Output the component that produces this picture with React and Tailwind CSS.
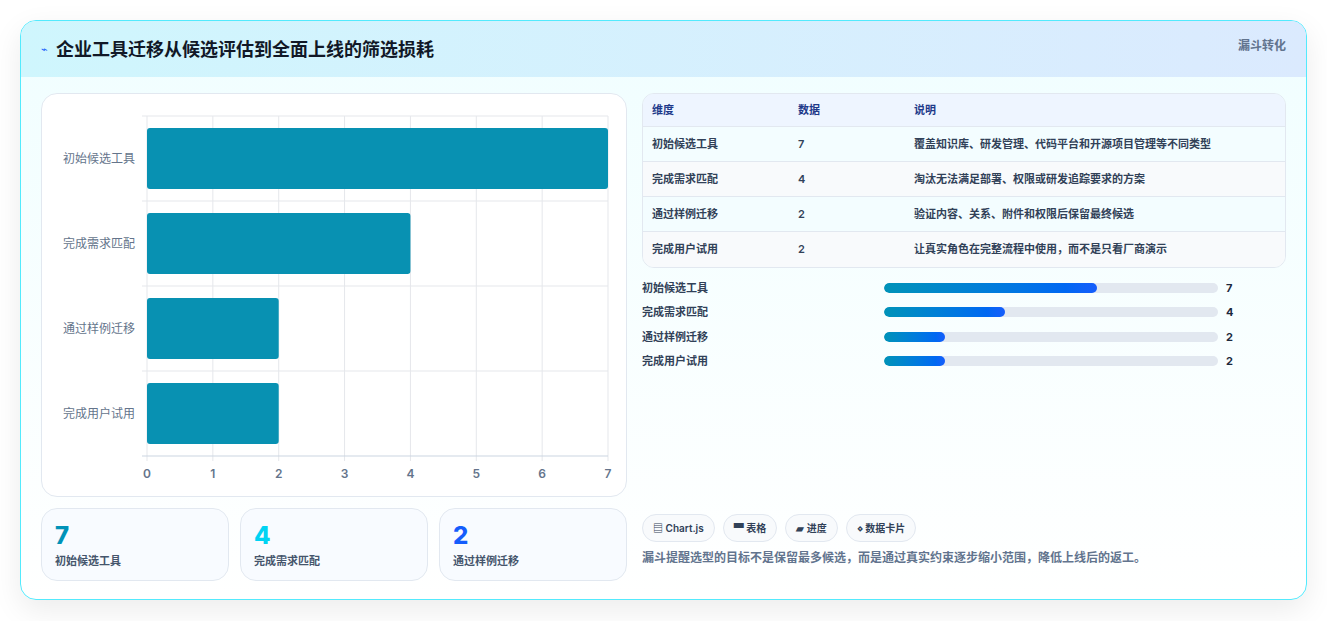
export default function App() {
  const rows = [
    ["初始候选工具", 7, "覆盖知识库、研发管理、代码平台和开源项目管理等不同类型"],
    ["完成需求匹配", 4, "淘汰无法满足部署、权限或研发追踪要求的方案"],
    ["通过样例迁移", 2, "验证内容、关系、附件和权限后保留最终候选"],
    ["完成用户试用", 2, "让真实角色在完整流程中使用，而不是只看厂商演示"],
  ];
  const px = (v) => 145 + (v / 7) * 461;
  return (
    <div className="w-[1327px] h-[621px] bg-white p-5 pb-0" style={{ fontFamily: "Inter, 'Noto Sans CJK SC', sans-serif" }}>
      <div className="h-[580px] rounded-2xl border border-cyan-300 bg-gradient-to-b from-[#f0feff] to-white shadow-[0_10px_30px_rgba(0,0,0,0.08)] overflow-hidden">
        <div className="h-[56px] flex items-center justify-between px-5 bg-gradient-to-r from-[#cff6fd] to-[#dbeafe]">
          <div className="flex items-center gap-2">
            <span className="text-[11px] text-blue-600">⌁</span>
            <span className="text-[18px] font-bold text-[#111827]">企业工具迁移从候选评估到全面上线的筛选损耗</span>
          </div>
          <span className="text-[12px] font-semibold text-slate-500 self-start mt-[16px]">漏斗转化</span>
        </div>
        <div className="flex gap-[15px] px-5 pt-[16px]">
          <div className="w-[586px] flex flex-col gap-[11px]">
            <div className="h-[404px] rounded-2xl border border-slate-200 bg-white">
              <svg width="586" height="404" viewBox="40 93 586 404">
                {[0,1,2,3,4,5,6,7].map((v) => (
                  <g key={v}>
                    <line x1={px(v)} y1="115" x2={px(v)} y2="460" stroke="#e5e7eb" />
                    <text x={px(v)} y="477" textAnchor="middle" fontSize="12" fontWeight="600" fill="#64748b">{v}</text>
                  </g>
                ))}
                {[115,200,285,370].map((y) => <line key={y} x1="140" x2="606" y1={y} y2={y} stroke="#e5e7eb" />)}
                <line x1="140" x2="606" y1="455" y2="455" stroke="#cbd5e1" />
                {rows.map((r, i) => (
                  <g key={i}>
                    <rect x="145" y={127 + i * 85} width={px(r[1]) - 145} height="61" rx="3" fill="#0891b2" />
                    <text x="133" y={162 + i * 85} textAnchor="end" fontSize="12" fill="#64748b">{r[0]}</text>
                  </g>
                ))}
              </svg>
            </div>
            <div className="flex gap-[11px]">
              {[[7, "text-cyan-600"], [4, "text-cyan-400"], [2, "text-blue-600"]].map(([n, c], i) => (
                <div key={i} className="flex-1 h-[73px] rounded-2xl border border-slate-200 bg-[#f8fbff] px-[13px] pt-[12px]">
                  <div className={`text-[24px] font-extrabold leading-[30px] ${c}`}>{n}</div>
                  <div className="text-[11px] font-semibold text-slate-600 mt-[2px]">{rows[i][0]}</div>
                </div>
              ))}
            </div>
          </div>
          <div className="flex-1 flex flex-col">
            <div className="rounded-xl border border-slate-200 overflow-hidden text-[11px] font-semibold">
              <div className="flex h-[33px] items-center bg-[#eef5ff] text-[#1e3a8a] border-b border-slate-200">
                <span className="w-[155px] pl-[9px]">维度</span><span className="w-[116px]">数据</span><span>说明</span>
              </div>
              {rows.map((r, i) => (
                <div key={i} className={`flex h-[35px] items-center text-slate-700 ${i < 3 ? "border-b border-slate-200" : ""} ${i % 2 ? "bg-[#f8fafc]" : "bg-[#f3fdff]"}`}>
                  <span className="w-[155px] pl-[9px]">{r[0]}</span><span className="w-[116px]">{r[1]}</span><span>{r[2]}</span>
                </div>
              ))}
            </div>
            <div className="flex flex-col gap-[9px] mt-[12px] text-[11px] font-semibold text-slate-700">
              {rows.map((r, i) => (
                <div key={i} className="flex items-center h-[15.5px]">
                  <span className="w-[242px]">{r[0]}</span>
                  <div className="w-[334px] h-[10px] rounded-full bg-slate-200 overflow-hidden">
                    <div className="h-full rounded-full bg-gradient-to-r from-cyan-600 to-blue-600" style={{ width: `${(r[1] / 11) * 100}%` }} />
                  </div>
                  <span className="ml-[8px] font-bold text-slate-800">{r[1]}</span>
                </div>
              ))}
            </div>
            <div className="mt-auto flex gap-[8px] text-[10px] font-semibold text-slate-700 mb-[7px]">
              {["▤ Chart.js", "▀ 表格", "▰ 进度", "⋄ 数据卡片"].map((t) => (
                <span key={t} className="h-[28px] px-[10px] flex items-center rounded-full border border-slate-200 bg-[#f8fafc]">{t}</span>
              ))}
            </div>
            <div className="text-[12px] font-semibold text-slate-500 mb-[14px]">漏斗提醒选型的目标不是保留最多候选，而是通过真实约束逐步缩小范围，降低上线后的返工。</div>
          </div>
        </div>
      </div>
    </div>
  );
}
